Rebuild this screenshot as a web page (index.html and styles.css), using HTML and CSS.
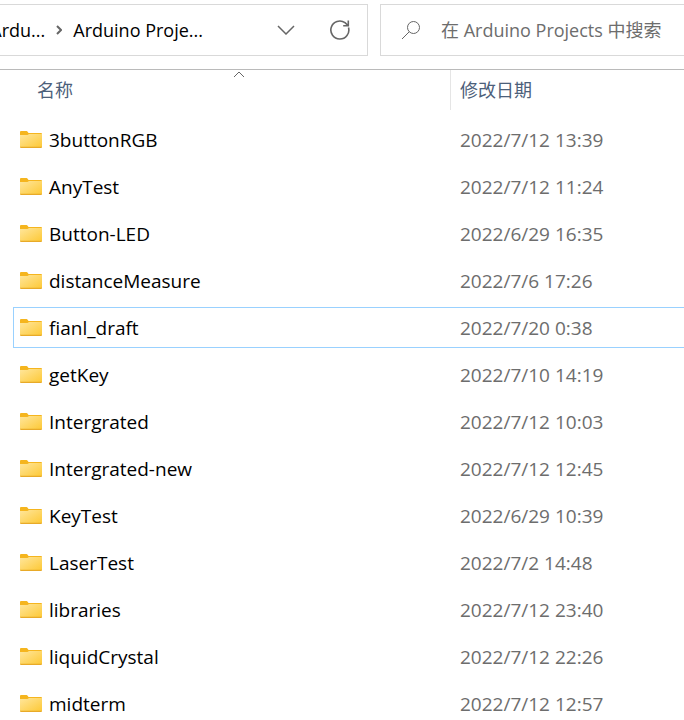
FILE: index.html
```html
<!DOCTYPE html>
<html lang="zh-CN">
<head>
<meta charset="utf-8">
<meta name="viewport" content="width=device-width, initial-scale=1">
<title>Arduino Projects</title>
<link rel="stylesheet" href="styles.css">
</head>
<body>
<svg class="defs" aria-hidden="true">
  <defs>
    <linearGradient id="folder-face" x1="0" y1="0" x2="1" y2="1">
      <stop offset="0" stop-color="#ffe69c"/>
      <stop offset="1" stop-color="#fdc937"/>
    </linearGradient>
    <symbol id="folder" viewBox="0 0 22 17">
      <path d="M0 1Q0 0 1 0H6.500Q7.200 0 7.800 1L8.500 2H21Q22 2 22 3V8H0Z" fill="#f5b51e"/>
      <path d="M0 4H7.500L9 3H22V16H0Z" fill="url(#folder-face)"/>
      <path d="M0 15.700H22V16Q22 17 21 17H1Q0 17 0 16Z" fill="#e8aa28"/>
    </symbol>
  </defs>
</svg>
<header class="toolbar">
  <nav class="address" aria-label="Path">
    <div class="crumbs">
      <a href="#">Ardu...</a>
      <svg class="separator" width="6" height="10" viewBox="0 0 6 10" aria-hidden="true"><path d="M1 1L5 5L1 9"/></svg>
      <a href="#">Arduino Proje...</a>
    </div>
    <button class="tool" type="button" aria-label="History">
      <svg width="18" height="10" viewBox="0 0 18 10"><path d="M1 1L9 9L17 1" stroke-width="1.500"/></svg>
    </button>
    <button class="tool" type="button" aria-label="Refresh">
      <svg width="20" height="20" viewBox="0 0 20 20"><path d="M18.500 7.500A9 9 0 1 1 15 2.600L18 5.500M18.300 .5V5.700H13.200" stroke-width="1.600"/></svg>
    </button>
  </nav>
  <label class="search">
    <svg width="20" height="20" viewBox="0 0 20 20" aria-hidden="true"><circle cx="12.500" cy="7.500" r="6"/><path d="M8.200 11.800L1 19"/></svg>
    <input type="search" aria-label="Search" placeholder="在 Arduino Projects 中搜索">
  </label>
</header>
<main>
  <table class="files">
    <thead>
      <tr>
        <th scope="col" aria-sort="ascending">名称<svg class="sort" width="12" height="7" viewBox="0 0 12 7" aria-hidden="true"><path d="M1 6L6 1L11 6"/></svg></th>
        <th scope="col">修改日期</th>
      </tr>
    </thead>
    <tbody>
      <tr><td><svg class="folder"><use href="#folder"/></svg>3buttonRGB</td><td>2022/7/12 13:39</td></tr>
      <tr><td><svg class="folder"><use href="#folder"/></svg>AnyTest</td><td>2022/7/12 11:24</td></tr>
      <tr><td><svg class="folder"><use href="#folder"/></svg>Button-LED</td><td>2022/6/29 16:35</td></tr>
      <tr><td><svg class="folder"><use href="#folder"/></svg>distanceMeasure</td><td>2022/7/6 17:26</td></tr>
      <tr class="focused"><td><svg class="folder"><use href="#folder"/></svg>fianl_draft</td><td>2022/7/20 0:38</td></tr>
      <tr><td><svg class="folder"><use href="#folder"/></svg>getKey</td><td>2022/7/10 14:19</td></tr>
      <tr><td><svg class="folder"><use href="#folder"/></svg>Intergrated</td><td>2022/7/12 10:03</td></tr>
      <tr><td><svg class="folder"><use href="#folder"/></svg>Intergrated-new</td><td>2022/7/12 12:45</td></tr>
      <tr><td><svg class="folder"><use href="#folder"/></svg>KeyTest</td><td>2022/6/29 10:39</td></tr>
      <tr><td><svg class="folder"><use href="#folder"/></svg>LaserTest</td><td>2022/7/2 14:48</td></tr>
      <tr><td><svg class="folder"><use href="#folder"/></svg>libraries</td><td>2022/7/12 23:40</td></tr>
      <tr><td><svg class="folder"><use href="#folder"/></svg>liquidCrystal</td><td>2022/7/12 22:26</td></tr>
      <tr><td><svg class="folder"><use href="#folder"/></svg>midterm</td><td>2022/7/12 12:57</td></tr>
    </tbody>
  </table>
</main>
</body>
</html>
```
FILE: styles.css
```css
* {
  box-sizing: border-box;
}

body {
  margin: 0;
  height: 100vh;
  overflow: hidden;
  background: #fff;
  color: #000;
  font: 19px/26px "Open Sans", "Noto Sans CJK SC", sans-serif;
}

svg {
  flex: none;
  fill: none;
  stroke: #666;
}

.defs {
  position: absolute;
  width: 0;
  height: 0;
}

.toolbar {
  display: flex;
  gap: 12px;
  padding: 4px 0 13px;
  border-bottom: 1px solid #bababa;
  font-size: 18px;
}

.address,
.search {
  display: flex;
  align-items: center;
  height: 52px;
  border: 1px solid #d9d9d9;
}

.address {
  flex: 0 0 368px;
  min-width: 0;
  border-left: 0;
}

.crumbs {
  display: flex;
  flex: 1;
  align-items: center;
  justify-content: flex-end;
  gap: 11px;
  min-width: 0;
  padding-right: 56px;
  overflow: hidden;
  white-space: nowrap;
}

.crumbs a {
  flex: none;
  color: inherit;
  text-decoration: none;
}

.separator {
  stroke-width: 2;
}

.tool {
  display: flex;
  flex: none;
  align-items: center;
  justify-content: center;
  width: 54px;
  height: 50px;
  padding: 0;
  border: 0;
  background: none;
}

.search {
  flex: 1;
  gap: 20px;
  min-width: 0;
  padding-left: 20px;
  border-right: 0;
}

.search input {
  flex: 1;
  min-width: 0;
  padding: 0;
  border: 0;
  outline: 0;
  background: none;
  font: inherit;
  appearance: none;
}

.search input::-webkit-search-cancel-button {
  display: none;
}

.search input::placeholder {
  color: #6d6d6d;
  opacity: 1;
}

.files {
  display: block;
  padding-left: 13px;
}

.files thead,
.files tbody {
  display: block;
}

.files tbody {
  padding-top: 9px;
}

.files tr {
  display: grid;
  grid-template-columns: 438px 1fr;
}

.files tbody tr {
  height: 41px;
  margin-bottom: 6px;
  border: 1px solid transparent;
  border-right: 0;
}

.files tbody .focused {
  border-color: #99d1ff;
}

.files th {
  position: relative;
  height: 40px;
  padding: 7px 9px;
  color: #4c607a;
  font-size: 18px;
  font-weight: 400;
  text-align: left;
}

.files th:first-child {
  padding-left: 24px;
  border-right: 1px solid #e5e5e5;
}

.sort {
  position: absolute;
  top: 1px;
  left: calc(50% + 1px);
}

.files td {
  display: flex;
  align-items: center;
  gap: 7px;
  padding: 0 8px;
  color: #6d6d6d;
}

.files td:first-child {
  padding: 0 6px;
  color: #000;
}

.folder {
  width: 22px;
  height: 17px;
  stroke: none;
}
```
